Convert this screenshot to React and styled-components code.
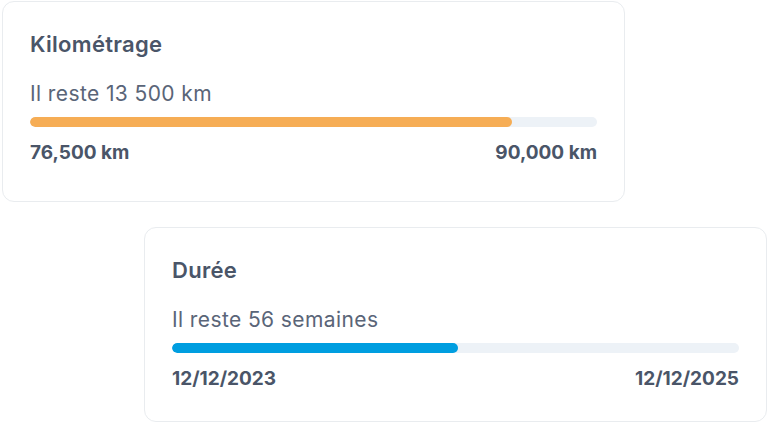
import styled, { createGlobalStyle } from "styled-components";

const GlobalStyle = createGlobalStyle`
  body {
    margin: 0;
    background: #fff;
    font-family: Inter, "Open Sans", sans-serif;
  }
`;

const cards = [
  {
    title: "Kilométrage",
    remaining: "Il reste 13 500 km",
    progress: 85,
    color: "#f6ad55",
    start: "76,500 km",
    end: "90,000 km",
    offset: 2,
    height: 201,
  },
  {
    title: "Durée",
    remaining: "Il reste 56 semaines",
    progress: 50.4,
    color: "#009ee0",
    start: "12/12/2023",
    end: "12/12/2025",
    offset: 144,
    height: 195,
  },
];

const App = () => {
  return (
    <>
      <GlobalStyle />
      <StyledPage>
        {cards.map((card) => (
          <StyledCard
            key={card.title}
            $offset={card.offset}
            $height={card.height}
          >
            <StyledTitle>{card.title}</StyledTitle>
            <StyledRemaining>{card.remaining}</StyledRemaining>
            <StyledTrack>
              <StyledFill
                $color={card.color}
                style={{ width: `${card.progress}%` }}
              />
            </StyledTrack>
            <StyledLabels>
              <StyledLabel>{card.start}</StyledLabel>
              <StyledLabel>{card.end}</StyledLabel>
            </StyledLabels>
          </StyledCard>
        ))}
      </StyledPage>
    </>
  );
};

const StyledPage = styled.div`
  display: flex;
  flex-direction: column;
  gap: 25px;
  padding-top: 1px;
`;

const StyledCard = styled.div`
  box-sizing: border-box;
  width: 623px;
  margin-left: ${(p) => p.$offset}px;
  height: ${(p) => p.$height}px;
  padding: 29px 27px 0 27px;
  border: 1px solid #e9ecef;
  border-radius: 12px;
  background-color: #fff;
`;

const StyledTitle = styled.h2`
  margin: 0;
  font-size: 22px;
  line-height: 26px;
  font-weight: 600;
  letter-spacing: 0.3px;
  color: #4a5568;
`;

const StyledRemaining = styled.p`
  margin: 25px 0 0;
  font-size: 21px;
  line-height: 24px;
  font-weight: 400;
  letter-spacing: 0.4px;
  color: #5a6578;
`;

const StyledTrack = styled.div`
  margin-top: 11px;
  height: 10px;
  border-radius: 5px;
  background-color: #edf2f7;
  overflow: hidden;
`;

const StyledFill = styled.div`
  height: 100%;
  border-radius: 5px;
  background-color: ${(p) => p.$color};
`;

const StyledLabels = styled.div`
  display: flex;
  justify-content: space-between;
  margin-top: 15px;
`;

const StyledLabel = styled.span`
  font-size: 19px;
  line-height: 22px;
  font-weight: 700;
  color: #4a5568;
`;

export default App;
